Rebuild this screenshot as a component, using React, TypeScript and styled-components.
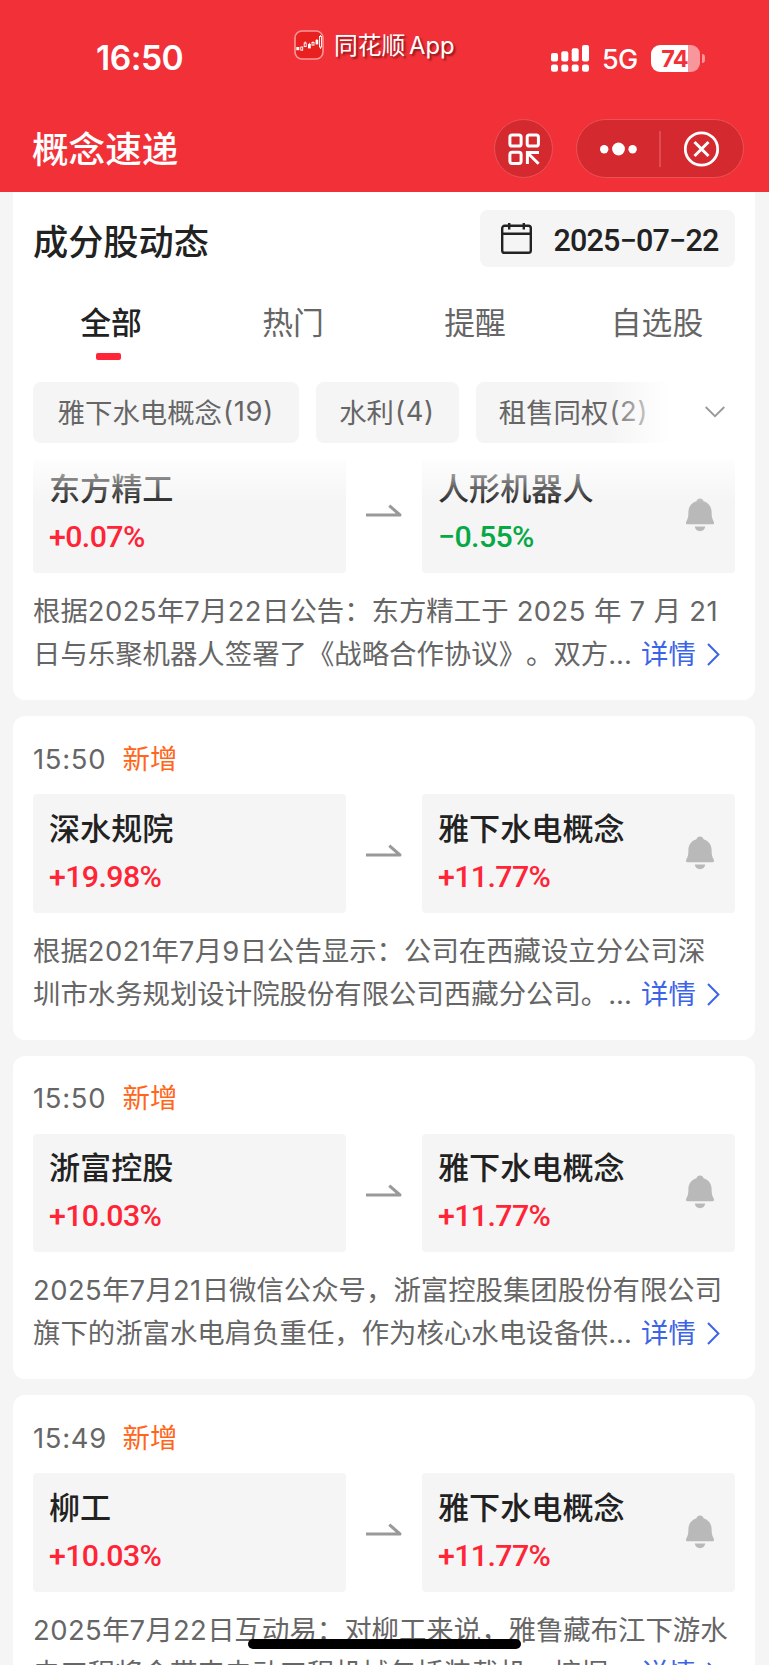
import React from "react";
import styled, { createGlobalStyle, css } from "styled-components";

const cjk = `Inter, "Noto Sans CJK SC", sans-serif`;

const GlobalStyle = createGlobalStyle`
  * { box-sizing: border-box; }
  html, body { margin: 0; padding: 0; background: #f5f5f5; }
  body { height: 1665px; overflow: hidden; font-family: ${cjk}; color: #222; text-spacing-trim: space-all; }
`;

const Screen = styled.div`
  position: relative;
  width: 769px;
  height: 1665px;
  overflow: hidden;
  display: flex;
  flex-direction: column;
  background: #f5f5f5;
`;

const Header = styled.header`
  flex: none;
  height: 191.5px;
  background: #f23038;
  color: #fff;
  display: flex;
  flex-direction: column;
`;

const StatusBar = styled.div`
  height: 119px;
  display: flex;
  align-items: flex-start;
`;

const Clock = styled.div`
  width: 294px;
  padding: 36px 0 0 96px;
  font-size: 33.6px;
  line-height: 44px;
  font-weight: 600;
  letter-spacing: -0.5px;
`;

const Brand = styled.div`
  width: 257px;
  padding-top: 29px;
  display: flex;
  align-items: center;
  gap: 10px;
`;

const BrandName = styled.span`
  padding-top: 1.5px;
  font-size: 23.8px;
  line-height: 30px;
  word-spacing: -3px;
  white-space: nowrap;
  text-shadow: 2px 2px 2px rgba(60, 0, 0, 0.55);
`;

const Status = styled.div`
  padding-top: 43px;
  display: flex;
  align-items: center;
`;

const Network = styled.span`
  width: 37px;
  margin: 3px 12px 0 13px;
  font-size: 27px;
  line-height: 28px;
  font-weight: 500;
  letter-spacing: -0.7px;
`;

const Battery = styled.div`
  width: 49px;
  height: 27px;
  padding-right: 2px;
  border-radius: 9px;
  background: linear-gradient(90deg, #fff 37px, #f8979b 37px);
  color: #f23038;
  font-size: 23.5px;
  line-height: 27px;
  font-weight: 700;
  text-align: center;
  letter-spacing: -0.8px;
`;

const BatteryTip = styled.span`
  width: 3px;
  height: 9px;
  margin-left: 1.5px;
  border-radius: 0 4px 4px 0;
  background: #f8979b;
`;

const NavBar = styled.div`
  display: flex;
  align-items: flex-start;
  padding: 0 25px 0 32px;
`;

const PageTitle = styled.h1`
  flex: 1;
  margin: 9px 0 0;
  font-size: 36.6px;
  line-height: 44px;
  font-weight: 450;
`;

const glass = css`
  height: 59px;
  border: 1.5px solid #ea5258;
  border-radius: 30px;
  background: #d3292f;
  display: flex;
  align-items: center;
`;

const ScanButton = styled.div`
  ${glass}
  width: 59px;
  justify-content: center;
  margin-right: 23px;
`;

const Capsule = styled.div`
  ${glass}
  width: 168px;
`;

const CapsuleHalf = styled.div`
  flex: 1;
  display: flex;
  justify-content: center;
`;

const CapsuleRule = styled.div`
  width: 1.5px;
  height: 36px;
  background: #df4b51;
`;

const Panel = styled.section`
  flex: none;
  width: 742px;
  height: 268px;
  margin-left: 13px;
  padding: 0 20px;
  background: #fff;
`;

const PanelHead = styled.div`
  display: flex;
  justify-content: space-between;
  align-items: flex-start;
  padding-top: 18.5px;
  height: 95.5px;
`;

const PanelTitle = styled.h2`
  margin: 9px 0 0;
  font-size: 35.2px;
  line-height: 46px;
  font-weight: 500;
`;

const DatePicker = styled.div`
  width: 255px;
  height: 57px;
  padding-left: 21px;
  border-radius: 8px;
  background: #f5f5f5;
  display: flex;
  align-items: center;
  gap: 21.5px;
`;

const DateText = styled.span`
  padding-top: 3px;
  font-family: Roboto, sans-serif;
  font-weight: 500;
  font-size: 30.5px;
  letter-spacing: -0.8px;
  white-space: nowrap;
`;

const Tabs = styled.nav`
  display: flex;
  margin: 0 -13px;
  height: 94.5px;
`;

const Tab = styled.div<{ $active?: boolean }>`
  width: 182px;
  padding-top: 13px;
  display: flex;
  flex-direction: column;
  align-items: center;
  font-size: 30.8px;
  line-height: 46px;
  font-weight: ${(p) => (p.$active ? 500 : 400)};
  color: ${(p) => (p.$active ? "#222" : "#666")};
`;

const TabMark = styled.span`
  width: 25px;
  height: 7px;
  margin: 7px 6px 0 0;
  border-radius: 2px;
  background: #ff2436;
`;

const Filters = styled.div`
  position: relative;
  display: flex;
  gap: 17px;
`;

const Chip = styled.div<{ $w: number }>`
  width: ${(p) => p.$w}px;
  height: 61px;
  padding-bottom: 2px;
  border-radius: 8px;
  background: #f5f5f5;
  display: flex;
  align-items: center;
  justify-content: center;
  font-size: 27.4px;
  color: #666;
  white-space: nowrap;
`;

const ChipCount = styled.span`
  margin-left: 1px;
  letter-spacing: 0.7px;
`;

const FilterFade = styled.div`
  position: absolute;
  top: 0;
  left: 575px;
  width: 127px;
  height: 61px;
  background: linear-gradient(90deg, rgba(255, 255, 255, 0), #fff 62px);
  display: flex;
  align-items: center;
  justify-content: flex-end;
  padding-right: 10px;
`;

const Feed = styled.main`
  flex: none;
  display: flex;
  flex-direction: column;
  gap: 16px;
  margin-left: 13px;
  width: 742px;
`;

const Card = styled.article<{ $first?: boolean }>`
  position: relative;
  height: ${(p) => (p.$first ? 240.5 : 323.7)}px;
  padding: 0 20px;
  border-radius: ${(p) => (p.$first ? "0 0 12px 12px" : "12px")};
  background: #fff;
`;

const CardHead = styled.div`
  height: 78px;
  padding-top: 21.5px;
  display: flex;
  gap: 13px;
  font-size: 27.4px;
  line-height: 42px;
`;

const Time = styled.span`
  width: 76.5px;
  color: #666;
  letter-spacing: 0.7px;
  white-space: nowrap;
`;

const Badge = styled.span`
  color: #ff661a;
`;

const Pair = styled.div<{ $first?: boolean }>`
  display: flex;
  height: ${(p) => (p.$first ? 113 : 118.5)}px;
  align-items: stretch;
`;

const Quote = styled.div<{ $first?: boolean }>`
  width: 313px;
  padding: ${(p) => (p.$first ? 8.5 : 13.5)}px 20px 0 16px;
  border-radius: ${(p) => (p.$first ? "0 0 4px 4px" : "4px")};
  background: #f5f5f5;
  display: flex;
  justify-content: space-between;
`;

const QuoteName = styled.div`
  font-size: 31.1px;
  line-height: 42px;
  font-weight: 500;
  white-space: nowrap;
`;

const Change = styled.div<{ $down?: boolean }>`
  margin-top: 7px;
  font-family: Roboto, sans-serif;
  font-size: 30.3px;
  line-height: 40px;
  font-weight: 500;
  letter-spacing: -0.6px;
  color: ${(p) => (p.$down ? "#06a945" : "#ff2436")};
`;

const BellSlot = styled.div<{ $first?: boolean }>`
  padding-top: ${(p) => (p.$first ? 30 : 28)}px;
`;

const Link = styled.div<{ $first?: boolean }>`
  flex: 1;
  display: flex;
  justify-content: center;
  padding-top: ${(p) => (p.$first ? 44.5 : 50)}px;
`;

const Story = styled.div`
  padding-top: 17px;
  font-size: 27.4px;
  line-height: 43px;
  color: #666;
`;

const StoryLine = styled.div`
  height: 43px;
  display: flex;
  align-items: center;
  white-space: pre;
`;

const Digits = styled.span`
  letter-spacing: 0.45px;
`;

const StoryText = styled.span`
  width: 608px;
`;

const More = styled.a`
  display: flex;
  align-items: center;
  gap: 11px;
  color: #3c64e6;
`;

const TopFade = styled.div`
  position: absolute;
  inset: 0 0 auto;
  height: 44px;
  background: linear-gradient(180deg, rgba(255, 255, 255, 0.8), rgba(255, 255, 255, 0));
`;

const HomeIndicator = styled.div`
  position: absolute;
  left: 248px;
  bottom: 16px;
  width: 273px;
  height: 10px;
  border-radius: 5px;
  background: #000;
`;

const BrandIcon = () => (
  <svg width="30" height="30" viewBox="0 0 30 30">
    <rect x="1" y="1" width="28" height="28" rx="7" fill="#e8201f" stroke="#f8989a" strokeWidth="1.6" />
    <g fill="#fff">
      <rect x="2.3" y="17" width="3" height="3.2" />
      <rect x="14" y="14" width="2.8" height="4.4" />
      <rect x="21.6" y="10" width="2.6" height="4.4" />
    </g>
    <g fill="none" stroke="#fff" strokeWidth="0.9">
      <rect x="6.8" y="17" width="1.9" height="3.2" />
      <rect x="10.2" y="13" width="2" height="3.6" />
      <rect x="18" y="12.5" width="2" height="2.6" />
      <rect x="25.5" y="6.5" width="2" height="10.5" />
      <path d="M11.2 11.5v1.5M15.4 12.8v1.2M19 11.5v1M22.9 9v1M26.5 5v1.5M26.5 17v2" />
    </g>
  </svg>
);

const SignalIcon = () => (
  <svg width="38" height="27" viewBox="0 0 38 27" fill="#fff">
    <rect x="0" y="8" width="7" height="8.5" rx="2" />
    <rect x="10.3" y="6.3" width="7" height="10.2" rx="2" />
    <rect x="20.7" y="3.2" width="7" height="13.3" rx="2" />
    <rect x="31" y="0" width="7" height="16.5" rx="2" />
    <rect x="0" y="19.6" width="7" height="7.2" rx="2.2" />
    <rect x="10.3" y="19.6" width="7" height="7.2" rx="2.2" />
    <rect x="20.7" y="19.6" width="7" height="7.2" rx="2.2" />
    <rect x="31" y="19.6" width="7" height="7.2" rx="2.2" />
  </svg>
);

const ScanIcon = () => (
  <svg width="32" height="32" viewBox="0 0 32 32" fill="none" stroke="#fff" strokeWidth="3">
    <rect x="1.9" y="1.9" width="11.2" height="11.2" rx="2.2" />
    <rect x="19.2" y="1.9" width="11.2" height="11.2" rx="2.2" />
    <rect x="1.9" y="19.2" width="11.2" height="11.2" rx="2.2" />
    <path d="M19.4 31V19.6H31M20 20.2L30.6 30.8" />
  </svg>
);

const DotsIcon = () => (
  <svg width="38" height="14" viewBox="0 0 38 14" fill="#fff">
    <circle cx="5.2" cy="7.3" r="4.2" />
    <circle cx="19.5" cy="7" r="6.4" />
    <circle cx="33.600" cy="7.3" r="4.2" />
  </svg>
);

const CloseIcon = () => (
  <svg width="36" height="36" viewBox="0 0 36 36" fill="none" stroke="#fff" strokeWidth="2.8">
    <circle cx="17.500" cy="18" r="16.2" />
    <path d="M10.500 11l14 14M24.500 11L10.500 25" strokeWidth="3" />
  </svg>
);

const CalendarIcon = () => (
  <svg width="31" height="31" viewBox="0 0 31 31" fill="none" stroke="#222" strokeWidth="2.4">
    <rect x="1.2" y="2.8" width="28.6" height="27" rx="2.4" />
    <path d="M1 10.8h29M8.2 0v6.5M22.8 0v6.5" />
  </svg>
);

const ChevronDown = () => (
  <svg width="20" height="12" viewBox="0 0 20 12" fill="none" stroke="#999" strokeWidth="1.8">
    <path d="M0.7 1l9.3 9.2L19.3 1" />
  </svg>
);

const ChevronRight = () => (
  <svg width="13" height="23" viewBox="0 0 13 23" fill="none" stroke="#3c64e6" strokeWidth="2">
    <path d="M1 1l10.4 10.5L1 22" />
  </svg>
);

const ArrowIcon = () => (
  <svg width="36" height="13" viewBox="0 0 36 13" fill="none" stroke="#999" strokeWidth="3">
    <path d="M0 11h34L23.3 1.6" strokeLinejoin="round" />
  </svg>
);

const BellIcon = () => (
  <svg width="30" height="34" viewBox="0 0 30 34" fill="#b9b9b9">
    <path d="M15 .5c1.900 0 3.200 1.100 3.600 2.800 4.900 1.500 8 5.700 8 10.800 0 4 .3 6.300 2.100 9.500.7 1.500.3 2.700-1.200 2.700H2.500c-1.500 0-1.900-1.200-1.200-2.700 1.800-3.200 2.100-5.500 2.100-9.500 0-5.100 3.100-9.300 8-10.800C11.800 1.600 13.100.5 15 .5z" />
    <path d="M9.800 28.600h10.400c-.4 2.900-2.400 4.700-5.200 4.700s-4.800-1.800-5.200-4.700z" />
  </svg>
);

type Item = {
  time?: string;
  stock: string;
  stockChange: string;
  concept: string;
  conceptChange: string;
  down?: boolean;
  line1: string;
  line2: string;
};

const items: Item[] = [
  {
    stock: "东方精工", stockChange: "+0.07%", concept: "人形机器人", conceptChange: "−0.55%", down: true,
    line1: "根据2025年7月22日公告：东方精工于 2025 年 7 月 21",
    line2: "日与乐聚机器人签署了《战略合作协议》。双方...",
  },
  {
    time: "15:50", stock: "深水规院", stockChange: "+19.98%", concept: "雅下水电概念", conceptChange: "+11.77%",
    line1: "根据2021年7月9日公告显示：公司在西藏设立分公司深",
    line2: "圳市水务规划设计院股份有限公司西藏分公司。...",
  },
  {
    time: "15:50", stock: "浙富控股", stockChange: "+10.03%", concept: "雅下水电概念", conceptChange: "+11.77%",
    line1: "2025年7月21日微信公众号，浙富控股集团股份有限公司",
    line2: "旗下的浙富水电肩负重任，作为核心水电设备供...",
  },
  {
    time: "15:49", stock: "柳工", stockChange: "+10.03%", concept: "雅下水电概念", conceptChange: "+11.77%",
    line1: "2025年7月22日互动易：对柳工来说，雅鲁藏布江下游水",
    line2: "电工程将会带来电动工程机械包括装载机、挖掘...",
  },
];

const tabs = ["全部", "热门", "提醒", "自选股"];

const chips = [
  { name: "雅下水电概念", count: 19, width: 265.5 },
  { name: "水利", count: 4, width: 143 },
  { name: "租售同权", count: 2, width: 196 },
];

const spaceDigits = (text: string) =>
  text.split(/([\d ]+)/).map((part, i) => (i % 2 ? <Digits key={i}>{part}</Digits> : part));

const NewsCard = ({ item }: { item: Item }) => {
  const first = !item.time;
  return (
    <Card $first={first}>
      {item.time && (
        <CardHead>
          <Time>{item.time}</Time>
          <Badge>新增</Badge>
        </CardHead>
      )}
      <Pair $first={first}>
        <Quote $first={first}>
          <div>
            <QuoteName>{item.stock}</QuoteName>
            <Change>{item.stockChange}</Change>
          </div>
        </Quote>
        <Link $first={first}><ArrowIcon /></Link>
        <Quote $first={first}>
          <div>
            <QuoteName>{item.concept}</QuoteName>
            <Change $down={item.down}>{item.conceptChange}</Change>
          </div>
          <BellSlot $first={first}><BellIcon /></BellSlot>
        </Quote>
      </Pair>
      <Story>
        <StoryLine><span>{spaceDigits(item.line1)}</span></StoryLine>
        <StoryLine>
          <StoryText>{item.line2}</StoryText>
          <More>详情<ChevronRight /></More>
        </StoryLine>
      </Story>
      {first && <TopFade />}
    </Card>
  );
};

export default function App() {
  return (
    <Screen>
      <GlobalStyle />
      <Header>
        <StatusBar>
          <Clock>16:50</Clock>
          <Brand>
            <BrandIcon />
            <BrandName>同花顺 App</BrandName>
          </Brand>
          <Status>
            <SignalIcon />
            <Network>5G</Network>
            <Battery>74</Battery>
            <BatteryTip />
          </Status>
        </StatusBar>
        <NavBar>
          <PageTitle>概念速递</PageTitle>
          <ScanButton><ScanIcon /></ScanButton>
          <Capsule>
            <CapsuleHalf><DotsIcon /></CapsuleHalf>
            <CapsuleRule />
            <CapsuleHalf><CloseIcon /></CapsuleHalf>
          </Capsule>
        </NavBar>
      </Header>
      <Panel>
        <PanelHead>
          <PanelTitle>成分股动态</PanelTitle>
          <DatePicker>
            <CalendarIcon />
            <DateText>2025−07−22</DateText>
          </DatePicker>
        </PanelHead>
        <Tabs>
          {tabs.map((t, i) => (
            <Tab key={t} $active={i === 0}>
              {t}
              {i === 0 && <TabMark />}
            </Tab>
          ))}
        </Tabs>
        <Filters>
          {chips.map((c) => (
            <Chip key={c.name} $w={c.width}>
              {c.name}
              <ChipCount>({c.count})</ChipCount>
            </Chip>
          ))}
          <FilterFade><ChevronDown /></FilterFade>
        </Filters>
      </Panel>
      <Feed>
        {items.map((it) => (
          <NewsCard key={it.stock} item={it} />
        ))}
      </Feed>
      <HomeIndicator />
    </Screen>
  );
}
